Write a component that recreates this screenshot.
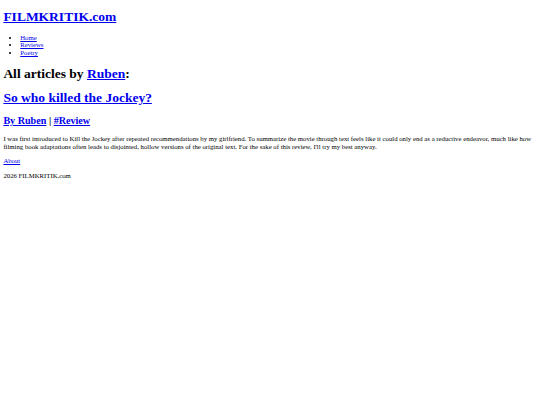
export default function App() {
  const link = "text-[#0000EE] underline";
  return (
    <div className="m-[3.375px] font-['Liberation_Serif',serif] text-[6.75px] leading-[7.77px] text-black">
      <header>
        <h1 className="my-[9.05px] text-[13.5px] leading-[15.5px] font-bold">
          <a href="#" className={link}>
            FILMKRITIK.com
          </a>
        </h1>
        <nav>
          <ul className="my-[6.75px] list-disc pl-[16.875px]">
            <li>
              <a href="#" className={link}>
                Home
              </a>
            </li>
            <li>
              <a href="#" className={link}>
                Reviews
              </a>
            </li>
            <li>
              <a href="#" className={link}>
                Poetry
              </a>
            </li>
          </ul>
        </nav>
      </header>
      <main>
        <h1 className="my-[9.05px] text-[13.5px] leading-[15.5px] font-bold">
          All articles by{" "}
          <a href="#" className={link}>
            Ruben
          </a>
          :
        </h1>
        <article>
          <h1 className="my-[9.05px] text-[13.5px] leading-[15.5px] font-bold">
            <a href="#" className={link}>
              So who killed the Jockey?
            </a>
          </h1>
          <h2 className="my-[8.4px] text-[10.125px] leading-[11.64px] font-bold">
            <a href="#" className={link}>
              By Ruben
            </a>{" "}
            |{" "}
            <a href="#" className={link}>
              #Review
            </a>
          </h2>
          <p className="my-[6.75px]">
            I was first introduced to Kill the Jockey after repeated recommendations by my
            girlfriend. To summarize the movie through text feels like it could only end as a
            reductive endeavor, much like how filming book adaptations often leads to disjointed,
            hollow versions of the original text. For the sake of this review, I'll try my best
            anyway.
          </p>
        </article>
      </main>
      <footer>
        <p className="my-[6.75px]">
          <a href="#" className={link}>
            About
          </a>
        </p>
        <p className="my-[6.75px]">2026 FILMKRITIK.com</p>
      </footer>
    </div>
  );
}
